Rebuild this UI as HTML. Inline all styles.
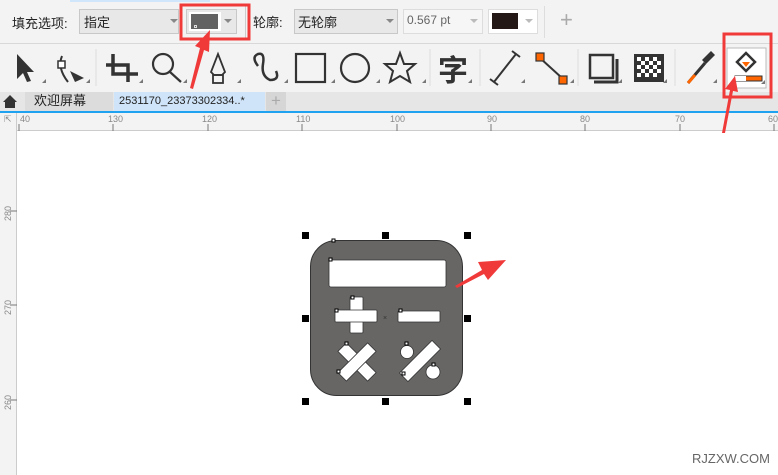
<!DOCTYPE html>
<html><head><meta charset="utf-8"><style>
*{margin:0;padding:0;box-sizing:border-box}
html,body{width:778px;height:475px;overflow:hidden}
body{background:#fff;font-family:"Liberation Sans","Noto Sans CJK SC",sans-serif;position:relative}
.a{position:absolute}
.lbl{font-size:13px;color:#222}
.dd{background:#e8e8e8;border:1px solid #c8c8c8}
.tick{position:absolute;font-size:9px;color:#888}
</style></head><body>
<div class="a" style="left:0;top:0;width:778px;height:44px;background:#f3f3f3;border-bottom:1px solid #d8d8d8"></div>
<div class="a lbl" style="left:12px;top:13px">填充选项:</div>
<div class="a dd" style="left:79px;top:9px;width:100px;height:25px"></div>
<div class="a lbl" style="left:84px;top:12px">指定</div>
<div class="a" style="left:170px;top:19px;border:4px solid transparent;border-top-color:#888"></div>
<div class="a dd" style="left:186px;top:9px;width:51px;height:25px"></div>
<div class="a" style="left:189px;top:12px;width:32px;height:19px;background:#fff"></div>
<div class="a" style="left:191px;top:14px;width:27px;height:15px;background:#636262"></div>
<div class="a" style="left:194px;top:25px;width:3px;height:3px;border:1px solid #ddd"></div>
<div class="a" style="left:224px;top:19px;border:4px solid transparent;border-top-color:#888"></div>
<div class="a" style="left:245px;top:6px;width:1px;height:32px;background:#ccc"></div>
<div class="a lbl" style="left:253px;top:12px">轮廓:</div>
<div class="a dd" style="left:294px;top:9px;width:104px;height:25px"></div>
<div class="a lbl" style="left:298px;top:12px">无轮廓</div>
<div class="a" style="left:386px;top:19px;border:4px solid transparent;border-top-color:#888"></div>
<div class="a" style="left:403px;top:9px;width:80px;height:25px;background:#f6f6f6;border:1px solid #ddd"></div>
<div class="a" style="left:407px;top:13px;font-size:12px;color:#666">0.567 pt</div>
<div class="a" style="left:470px;top:19px;border:4px solid transparent;border-top-color:#bbb"></div>
<div class="a" style="left:488px;top:9px;width:50px;height:25px;background:#fff;border:1px solid #ddd"></div>
<div class="a" style="left:492px;top:13px;width:26px;height:16px;background:#231815"></div>
<div class="a" style="left:525px;top:19px;border:4px solid transparent;border-top-color:#bbb"></div>
<div class="a" style="left:544px;top:6px;width:1px;height:32px;background:#ddd"></div>
<div class="a" style="left:560px;top:7px;font-size:22px;color:#aaa">+</div>
<div class="a" style="left:70px;top:0;width:140px;height:2px;background:#cfe6fb"></div>

<div class="a" style="left:0;top:44px;width:778px;height:48px;background:#f3f3f3"></div>
<svg class="a" style="left:0;top:44px" width="778" height="48" viewBox="0 0 778 48">
<g fill="#333" stroke="#333" stroke-width="2.2">
<path d="M17 10 L17 35 L23 29 L27 38 L31 37 L27 28 L34 28 Z" stroke="none"/>
<path d="M62 12 Q57 24 68 38" fill="none" stroke-width="2"/>
<rect x="58" y="17" width="7" height="7" fill="#fff" stroke-width="1.5"/>
<path d="M70 27 L84 34 L75 38 Z" stroke="none"/>
<line x1="96" y1="5" x2="96" y2="42" stroke="#ddd" stroke-width="1"/>
<path d="M113 10 V21 H128 V38 M106 21 H113 M121 30 H138 M113 21 V30 H121" fill="none" stroke-width="3.5"/>
<circle cx="163" cy="20" r="10" fill="none"/><line x1="170" y1="28" x2="181" y2="38"/>
<path d="M218 10 L211 28 L214 31 L222 31 L225 28 Z" fill="none" stroke-width="1.8"/>
<rect x="213" y="31" width="10" height="8" fill="none" stroke-width="1.8"/>
<path d="M258 22 Q251 13 258 10 Q265 8 263 20 Q261 32 270 36 Q280 36 276 27" fill="none" stroke-width="2.5"/>
<rect x="296" y="10" width="29" height="28" fill="none"/>
<circle cx="355" cy="24" r="14" fill="none"/>
<path d="M400 9 L404 20 L415 20 L407 27 L410 38 L400 32 L390 38 L393 27 L385 20 L396 20 Z" fill="none" stroke-width="2"/>
<line x1="430" y1="5" x2="430" y2="42" stroke="#ddd" stroke-width="1"/>
<text x="438" y="37" font-size="30" font-weight="bold" stroke="none" font-family="Noto Sans CJK SC,sans-serif">字</text>
<line x1="480" y1="5" x2="480" y2="42" stroke="#ddd" stroke-width="1"/>
<line x1="494" y1="38" x2="516" y2="10" stroke-width="2"/><line x1="490" y1="35" x2="498" y2="41" stroke-width="2"/><line x1="512" y1="7" x2="520" y2="13" stroke-width="2"/>
<line x1="540" y1="14" x2="562" y2="34" stroke-width="2"/>
<rect x="536" y="9" width="8" height="8" fill="#f60" stroke-width="1.2"/><rect x="559" y="32" width="8" height="8" fill="#f60" stroke-width="1.2"/>
<line x1="578" y1="5" x2="578" y2="42" stroke="#ddd" stroke-width="1"/>
<rect x="590" y="11" width="23" height="23" fill="none" stroke-width="2.5"/><path d="M617 15 V38 H594" fill="none" stroke-width="3"/>
<rect x="634" y="10" width="30" height="28" stroke="none"/>
<line x1="675" y1="5" x2="675" y2="42" stroke="#ddd" stroke-width="1"/>
<path d="M688 39 L705 19" stroke-width="3"/><path d="M688 39 L695 31" stroke="#f60" stroke-width="3"/>
<path d="M702 16 L711 7 L715 11 L706 20 Z" stroke="none"/>
<rect x="727" y="4" width="39" height="40" fill="#fff" stroke="#bbb" stroke-width="1"/>
<path d="M746 9 L755 18 L746 27 L737 18 Z" fill="none" stroke-width="2.5"/>
<path d="M742 18 L750 18 L746 23 Z" fill="#f60" stroke="none"/>
<rect x="735" y="32" width="27" height="5" fill="#f60" stroke="#333" stroke-width="1"/><rect x="735" y="32" width="11" height="5" fill="#fff" stroke="none"/>
</g>
<g fill="#777">
<path d="M42 39 h4 v-4z M86 39 h4 v-4z M139 39 h4 v-4z M183 39 h4 v-4z M237 39 h4 v-4z M284 39 h4 v-4z M331 39 h4 v-4z M376 39 h4 v-4z M422 39 h4 v-4z M468 39 h4 v-4z M521 39 h4 v-4z M570 39 h4 v-4z M618 39 h4 v-4z M663 39 h4 v-4z M713 39 h4 v-4z M761 40 h4 v-4z"/>
</g>
<g fill="#fff"><rect x="637" y="13" width="4" height="4"/><rect x="645" y="13" width="4" height="4"/><rect x="653" y="13" width="4" height="4"/><rect x="641" y="17" width="4" height="4"/><rect x="649" y="17" width="4" height="4"/><rect x="657" y="17" width="4" height="4"/><rect x="637" y="21" width="4" height="4"/><rect x="645" y="21" width="4" height="4"/><rect x="653" y="21" width="4" height="4"/><rect x="641" y="25" width="4" height="4"/><rect x="649" y="25" width="4" height="4"/><rect x="657" y="25" width="4" height="4"/><rect x="637" y="29" width="4" height="4"/><rect x="645" y="29" width="4" height="4"/><rect x="653" y="29" width="4" height="4"/></g>
</svg>

<div class="a" style="left:0;top:92px;width:778px;height:19px;background:#e6e6e6"></div>
<svg class="a" style="left:2px;top:94px" width="16" height="14"><path d="M8 1 L15 8 L13 8 L13 14 L3 14 L3 8 L1 8 Z" fill="#333"/></svg>
<div class="a" style="left:25px;top:92px;width:88px;height:19px;background:#dcdcdc"></div>
<div class="a lbl" style="left:34px;top:92px;line-height:18px">欢迎屏幕</div>
<div class="a" style="left:114px;top:92px;width:151px;height:19px;background:#cfe4f8"></div>
<div class="a" style="left:119px;top:95px;font-size:11px;color:#222">2531170_23373302334..*</div>
<div class="a" style="left:266px;top:92px;width:20px;height:19px;background:#d6d6d6;color:#aaa;font-size:17px;text-align:center;line-height:18px">+</div>
<div class="a" style="left:0;top:111px;width:778px;height:2px;background:#1fa3f0"></div>

<div class="a" style="left:0;top:113px;width:778px;height:18px;background:#f3f3f3;border-bottom:1px solid #ccc"></div>
<div class="a" style="left:0;top:113px;width:17px;height:362px;background:#f3f3f3;border-right:1px solid #ccc"></div>
<div class="tick" style="left:4px;top:114px">⇱</div>
<div class="tick" style="left:20px;top:114px">40</div>
<div class="tick" style="left:108px;top:114px">130</div>
<div class="tick" style="left:202px;top:114px">120</div>
<div class="tick" style="left:296px;top:114px">110</div>
<div class="tick" style="left:390px;top:114px">100</div>
<div class="tick" style="left:487px;top:114px">90</div>
<div class="tick" style="left:580px;top:114px">80</div>
<div class="tick" style="left:675px;top:114px">70</div>
<div class="tick" style="left:768px;top:114px">60</div>
<svg class="a" style="left:0;top:113px" width="778" height="362">
<g stroke="#777" stroke-width="1">
<path d="M19 11v7 M113 11v7 M208 11v7 M302 11v7 M397 11v7 M491 11v7 M585 11v7 M680 11v7 M774 11v7"/>
<path d="M10 98h7 M10 192h7 M10 287h7"/>
</g>
<g fill="#888" font-size="9">
<text transform="translate(11,108) rotate(-90)">280</text>
<text transform="translate(11,202) rotate(-90)">270</text>
<text transform="translate(11,297) rotate(-90)">260</text>
</g>
</svg>

<svg class="a" style="left:0;top:0" width="778" height="475">
<rect x="310.5" y="240.5" width="152" height="155" rx="26" fill="#676665" stroke="#333" stroke-width="1"/>
<g fill="#fff" stroke="#333" stroke-width="0.8">
<rect x="329" y="260" width="117" height="27" rx="2"/>
<rect x="350" y="297" width="13" height="36" rx="1"/>
<rect x="335" y="310" width="42" height="12" rx="1"/>
<rect x="398" y="311" width="42" height="11" rx="1"/>
<rect x="336" y="356" width="42" height="12" transform="rotate(45 357 362)"/>
<rect x="336" y="356" width="42" height="12" transform="rotate(-45 357 362)"/>
<rect x="397" y="355" width="46" height="12" transform="rotate(-45 420 361)"/>
<circle cx="407" cy="352" r="6.5"/><circle cx="433" cy="372" r="7"/>
</g>
<g fill="#fff" stroke="#000" stroke-width="1">
<rect x="332" y="239" width="3" height="3"/><rect x="329" y="258" width="3" height="3"/><rect x="351" y="296" width="3" height="3"/><rect x="335" y="309" width="3" height="3"/><rect x="399" y="309" width="3" height="3"/><rect x="345" y="342" width="3" height="3"/><rect x="337" y="370" width="3" height="3"/><rect x="405" y="342" width="3" height="3"/><rect x="402" y="372" width="3" height="3"/><rect x="432" y="363" width="3" height="3"/>
</g>
<text x="383" y="320" font-size="7" fill="#333">×</text>
<g fill="#000">
<rect x="302" y="232" width="7" height="7"/><rect x="382" y="232" width="7" height="7"/><rect x="464" y="232" width="7" height="7"/>
<rect x="302" y="315" width="7" height="7"/><rect x="464" y="315" width="7" height="7"/>
<rect x="302" y="398" width="7" height="7"/><rect x="382" y="398" width="7" height="7"/><rect x="464" y="398" width="7" height="7"/>
</g>
<g fill="none" stroke="#f03a3a" stroke-width="3">
<rect x="181" y="5" width="68" height="34"/>
<rect x="724" y="34" width="47" height="63"/>
</g>
<g fill="#f03a3a">
<path d="M190 88 L200 48 L195 46 L210 30 L209 52 L204 50 L193 89 Z"/>
<path d="M455 286 L482 270 L478 262 L506 260 L488 280 L484 274 L457 288 Z"/>
<path d="M722 133 L730 90 L725 89 L735 76 L738 92 L733 91 L725 133 Z"/>
</g>
</svg>
<div class="a" style="left:692px;top:451px;font-size:13px;color:#666">RJZXW.COM</div>
</body></html>
